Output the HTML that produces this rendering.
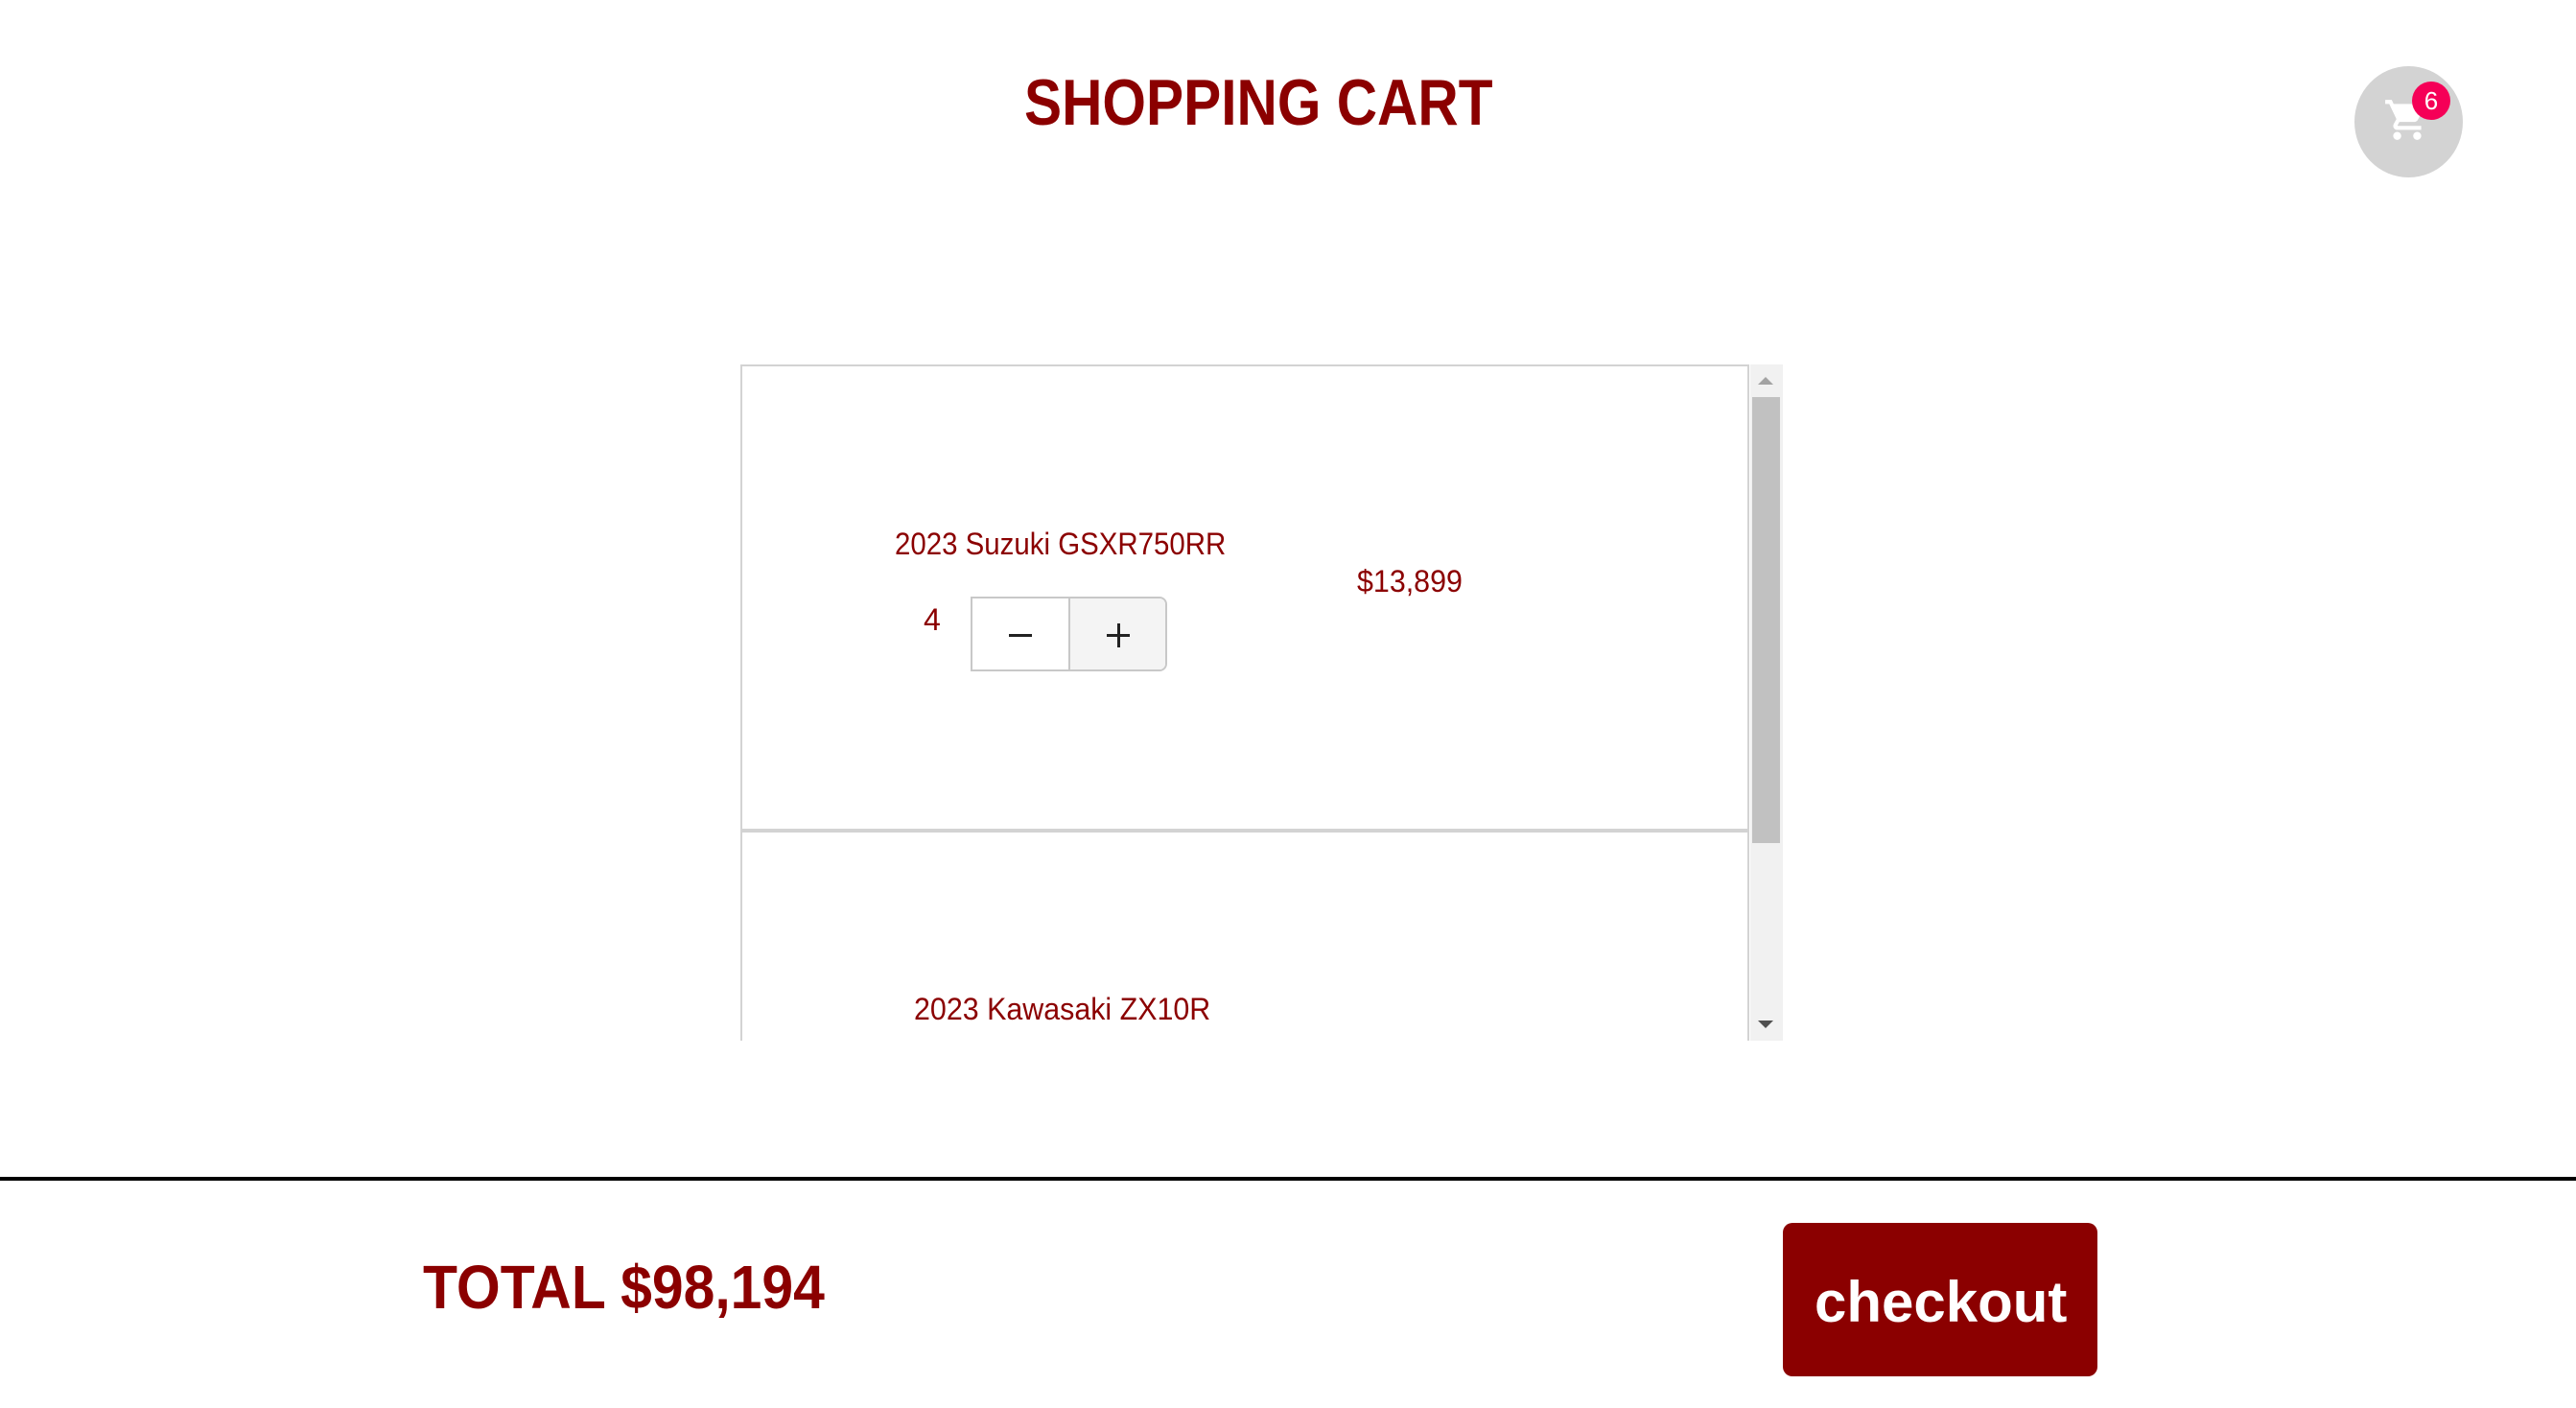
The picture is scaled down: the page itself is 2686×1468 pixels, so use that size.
<!DOCTYPE html>
<html><head><meta charset="utf-8"><style>
html,body{margin:0;padding:0;background:#fff;width:2686px;height:1468px;overflow:hidden;position:relative;font-family:"Liberation Sans",sans-serif;color:#8b0000}
.t{position:absolute;white-space:nowrap;transform-origin:0 0;line-height:1}
</style></head><body>
<div class="t" style="left:1068px;top:73px;font-size:68px;font-weight:bold;transform:scaleX(0.862)">SHOPPING CART</div>

<div style="position:absolute;left:2455px;top:69px;width:113px;height:116px;border-radius:50%;background:#d3d3d3"></div>
<svg style="position:absolute;left:2485px;top:100px" width="50" height="50" viewBox="0 0 24 24"><path fill="#fff" d="M7 18c-1.1 0-2 .9-2 2s.9 2 2 2 2-.9 2-2-.9-2-2-2zM1 2v2h2l3.6 7.59-1.350 2.45c-.16.28-.25.61-.25.96 0 1.1.9 2 2 2h12v-2H7.42c-.14 0-.25-.11-.25-.25l.03-.12.9-1.630h7.45c.75 0 1.410-.41 1.75-1.03l3.58-6.49A1 1 0 0 0 20 4H5.21l-.94-2H1zm16 16c-1.1 0-2 .9-2 2s.9 2 2 2 2-.9 2-2-.9-2-2-2z"/></svg>
<div style="position:absolute;left:2515px;top:85px;width:40px;height:40px;border-radius:50%;background:#f50057;color:#fff;font-size:26px;line-height:40px;text-align:center">6</div>

<div style="position:absolute;left:772px;top:380px;width:1052px;height:720px;border:2px solid #d3d3d3;border-bottom:none;box-sizing:border-box"></div>
<div style="position:absolute;left:772px;top:864px;width:1052px;height:4px;background:#d3d3d3"></div>
<div style="position:absolute;left:1825px;top:380px;width:34px;height:705px;background:#f1f1f1"></div>
<div style="position:absolute;left:1827px;top:414px;width:29px;height:465px;background:#c1c1c1"></div>
<div style="position:absolute;left:1833px;top:393px;width:0;height:0;border-left:8px solid transparent;border-right:8px solid transparent;border-bottom:8px solid #a3a3a3"></div>
<div style="position:absolute;left:1833px;top:1064px;width:0;height:0;border-left:8px solid transparent;border-right:8px solid transparent;border-top:8px solid #505050"></div>
<div style="position:absolute;left:0;top:1085px;width:2686px;height:383px;background:#fff"></div>

<div class="t" style="left:933px;top:551px;font-size:32px;transform:scaleX(0.92)">2023 Suzuki GSXR750RR</div>
<div class="t" style="left:1415px;top:590px;font-size:32px;transform:scaleX(0.95)">$13,899</div>
<div class="t" style="left:963px;top:630px;font-size:32px">4</div>
<div style="position:absolute;left:1012px;top:622px;width:205px;height:78px;border:2px solid #c8c8c8;border-radius:0 8px 8px 0;box-sizing:border-box;background:#fff;overflow:hidden">
 <div style="position:absolute;left:100px;top:0;width:103px;height:76px;background:#f4f4f4;border-left:2px solid #c8c8c8"></div>
 <div style="position:absolute;left:38px;top:37px;width:24px;height:3px;background:#222"></div>
 <div style="position:absolute;left:140px;top:37px;width:24px;height:3px;background:#222"></div>
 <div style="position:absolute;left:150.5px;top:26px;width:3px;height:25px;background:#222"></div>
</div>
<div class="t" style="left:953px;top:1036px;font-size:32px;transform:scaleX(0.95)">2023 Kawasaki ZX10R</div>

<div style="position:absolute;left:0;top:1227px;width:2686px;height:4px;background:#000"></div>
<div class="t" style="left:441px;top:1310px;font-size:64px;font-weight:bold;transform:scaleX(0.92)">TOTAL $98,194</div>
<div style="position:absolute;left:1859px;top:1275px;width:328px;height:160px;background:#8b0000;border-radius:10px"></div>
<div class="t" style="left:1892px;top:1328px;font-size:60px;font-weight:bold;color:#fff">checkout</div>
</body></html>
